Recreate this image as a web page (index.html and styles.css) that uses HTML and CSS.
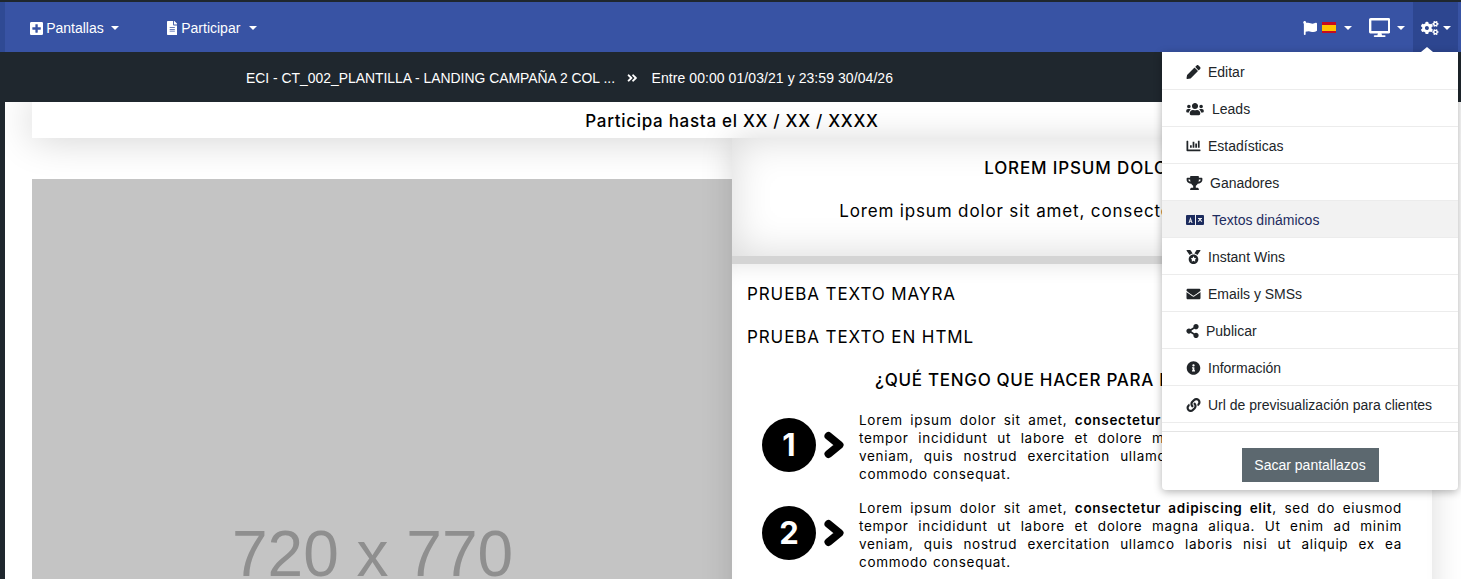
FILE: index.html
```html
<!DOCTYPE html>
<html lang="es">
<head>
    <meta charset="UTF-8">
    <meta name="viewport" content="width=device-width, initial-scale=1.0">
    <title>Landing campaña</title>
    <link rel="stylesheet" href="styles.css">
</head>
<body>
    <header class="navbar">
        <nav class="nav-left">
            <a class="nav-link nav-pantallas">
                <svg class="icon" viewBox="0 0 448 512"><path d="M400 32H48C21.5 32 0 53.5 0 80v352c0 26.5 21.5 48 48 48h352c26.5 0 48-21.5 48-48V80c0-26.5-21.5-48-48-48zm-32 252c0 6.6-5.4 12-12 12h-92v92c0 6.6-5.4 12-12 12h-56c-6.6 0-12-5.4-12-12v-92H92c-6.6 0-12-5.4-12-12v-56c0-6.6 5.4-12 12-12h92v-92c0-6.6 5.4-12 12-12h56c6.6 0 12 5.4 12 12v92h92c6.6 0 12 5.4 12 12v56z"/></svg>
                Pantallas <span class="caret"></span>
            </a>
            <a class="nav-link nav-participar">
                <svg class="icon" viewBox="0 0 384 512"><path d="M224 136V0H24C10.7 0 0 10.7 0 24v464c0 13.3 10.7 24 24 24h336c13.3 0 24-10.7 24-24V160H248c-13.2 0-24-10.8-24-24zm64 236c0 6.6-5.4 12-12 12H108c-6.6 0-12-5.4-12-12v-8c0-6.6 5.4-12 12-12h168c6.6 0 12 5.4 12 12v8zm0-64c0 6.6-5.4 12-12 12H108c-6.6 0-12-5.4-12-12v-8c0-6.6 5.4-12 12-12h168c6.6 0 12 5.4 12 12v8zm0-72v8c0 6.6-5.4 12-12 12H108c-6.6 0-12-5.4-12-12v-8c0-6.6 5.4-12 12-12h168c6.6 0 12 5.4 12 12zm96-114.100v6.100H256V0h6.100c6.4 0 12.5 2.5 17 7l97.900 98c4.5 4.5 7 10.6 7 16.900z"/></svg>
                Participar <span class="caret"></span>
            </a>
        </nav>
        <nav class="nav-right">
            <a class="nav-tool nav-lang">
                <svg class="icon" viewBox="0 0 512 512"><path d="M349.565 98.783C295.978 98.783 251.721 64 184.348 64c-24.955 0-47.309 4.384-68.045 12.013a55.947 55.947 0 0 0 3.586-23.562C118.117 24.015 94.806 1.206 66.338.048 34.345-1.254 8 24.296 8 56c0 19.026 9.497 35.825 24 45.945V488c0 13.255 10.745 24 24 24h16c13.255 0 24-10.745 24-24v-94.400c28.311-12.064 63.582-22.122 114.435-22.122 53.588 0 97.844 34.783 165.217 34.783 48.169 0 86.667-16.294 122.505-40.858C506.84 359.452 512 349.571 512 339.045v-243.100c0-23.393-24.269-38.87-45.485-29.016-34.338 15.948-76.454 31.854-116.95 31.854z"/></svg>
                <span class="flag"><span class="flag-mid"></span></span>
                <span class="caret"></span>
            </a>
            <a class="nav-tool nav-screen">
                <svg class="icon" viewBox="0 0 576 512"><path d="M528 0H48C21.5 0 0 21.5 0 48v320c0 26.5 21.5 48 48 48h192l-16 48h-72c-13.3 0-24 10.7-24 24s10.7 24 24 24h272c13.3 0 24-10.7 24-24s-10.7-24-24-24h-72l-16-48h192c26.5 0 48-21.5 48-48V48c0-26.5-21.5-48-48-48zm-16 352H64V64h448v288z"/></svg>
                <span class="caret"></span>
            </a>
            <a class="nav-tool nav-cogs">
                <svg class="icon" viewBox="0 0 640 512"><path d="M512.100 191l-8.200 14.300c-3 5.300-9.400 7.500-15.100 5.400-11.800-4.400-22.600-10.700-32.100-18.600-4.600-3.800-5.800-10.500-2.800-15.700l8.200-14.300c-6.900-8-12.300-17.300-15.900-27.400h-16.500c-6 0-11.200-4.300-12.200-10.300-2-12-2.100-24.600 0-37.100 1-6 6.200-10.400 12.200-10.400h16.500c3.600-10.100 9-19.400 15.900-27.400l-8.200-14.300c-3-5.200-1.900-11.900 2.800-15.700 9.500-7.900 20.400-14.200 32.100-18.600 5.700-2.100 12.100.1 15.100 5.400l8.200 14.300c10.500-1.900 21.200-1.900 31.700 0L552 6.300c3-5.300 9.400-7.500 15.100-5.400 11.800 4.400 22.600 10.700 32.100 18.600 4.600 3.800 5.800 10.500 2.800 15.700l-8.200 14.300c6.900 8 12.300 17.300 15.900 27.400h16.500c6 0 11.200 4.300 12.200 10.300 2 12 2.100 24.600 0 37.100-1 6-6.200 10.400-12.200 10.400h-16.500c-3.600 10.100-9 19.400-15.900 27.400l8.200 14.300c3 5.200 1.900 11.900-2.800 15.700-9.500 7.900-20.400 14.200-32.100 18.600-5.700 2.100-12.100-.1-15.100-5.400l-8.200-14.300c-10.400 1.900-21.200 1.900-31.700 0zm-10.500-58.800c38.500 29.600 82.400-14.300 52.800-52.800-38.500-29.700-82.400 14.300-52.800 52.800zM386.300 286.100l33.700 16.800c10.100 5.800 14.500 18.100 10.500 29.100-8.900 24.200-26.400 46.400-42.600 65.800-7.400 8.900-20.200 11.100-30.300 5.300l-29.100-16.800c-16 13.700-34.600 24.600-54.900 31.700v33.600c0 11.600-8.300 21.600-19.700 23.600-24.600 4.200-50.400 4.400-75.900 0-11.500-2-20-11.900-20-23.600V418c-20.300-7.200-38.900-18-54.900-31.700L74 403c-10 5.800-22.900 3.600-30.300-5.300-16.200-19.400-33.300-41.600-42.200-65.700-4-10.900.4-23.200 10.500-29.100l33.300-16.800c-3.900-20.900-3.900-42.400 0-63.400L12 205.800c-10.100-5.800-14.600-18.100-10.500-29 8.900-24.200 26-46.400 42.200-65.800 7.400-8.900 20.200-11.100 30.300-5.300l29.100 16.800c16-13.700 34.600-24.600 54.900-31.700V57.100c0-11.500 8.200-21.500 19.600-23.500 24.600-4.200 50.500-4.400 76-.1 11.500 2 20 11.900 20 23.600v33.600c20.300 7.200 38.900 18 54.900 31.700l29.100-16.800c10-5.800 22.900-3.600 30.300 5.300 16.200 19.400 33.200 41.600 42.100 65.800 4 10.900.1 23.200-10 29.100l-33.700 16.800c3.900 21 3.900 42.500 0 63.500zm-117.600 21.100c59.200-77-28.700-164.900-105.700-105.700-59.200 77 28.700 164.900 105.700 105.700zm243.400 182.700l-8.200 14.300c-3 5.300-9.400 7.500-15.100 5.400-11.800-4.400-22.600-10.700-32.100-18.600-4.600-3.800-5.800-10.500-2.800-15.700l8.200-14.300c-6.900-8-12.300-17.300-15.900-27.400h-16.500c-6 0-11.200-4.300-12.200-10.300-2-12-2.100-24.600 0-37.100 1-6 6.200-10.400 12.200-10.400h16.500c3.600-10.100 9-19.400 15.900-27.400l-8.200-14.300c-3-5.200-1.900-11.900 2.800-15.700 9.500-7.900 20.400-14.200 32.100-18.600 5.700-2.100 12.100.1 15.100 5.400l8.200 14.300c10.500-1.900 21.200-1.900 31.700 0l8.200-14.300c3-5.300 9.400-7.500 15.100-5.400 11.800 4.400 22.600 10.700 32.100 18.600 4.600 3.800 5.800 10.500 2.800 15.700l-8.200 14.300c6.900 8 12.300 17.300 15.900 27.400h16.500c6 0 11.200 4.300 12.200 10.300 2 12 2.100 24.600 0 37.100-1 6-6.200 10.400-12.200 10.400h-16.500c-3.600 10.100-9 19.400-15.900 27.400l8.200 14.300c3 5.200 1.900 11.900-2.800 15.700-9.500 7.900-20.400 14.200-32.100 18.600-5.700 2.100-12.100-.1-15.100-5.400l-8.200-14.300c-10.400 1.900-21.200 1.900-31.700 0zM501.600 431c38.500 29.600 82.400-14.300 52.800-52.800-38.500-29.600-82.400 14.300-52.800 52.800z"/></svg>
                <span class="caret"></span>
            </a>
        </nav>
    </header>

    <div class="subbar">
        <span class="subbar-name">ECI - CT_002_PLANTILLA - LANDING CAMPAÑA 2 COL ...</span>
        <svg class="subbar-arrows" viewBox="0 0 448 512"><path d="M224.300 273l-136 136c-9.400 9.400-24.600 9.400-33.900 0l-22.600-22.600c-9.400-9.400-9.400-24.600 0-33.900l96.400-96.400-96.400-96.400c-9.400-9.400-9.400-24.600 0-33.900L54.300 103c9.400-9.400 24.600-9.400 33.900 0l136 136c9.500 9.400 9.500 24.600.1 34zm192-34l-136-136c-9.400-9.400-24.600-9.400-33.900 0l-22.600 22.600c-9.400 9.400-9.400 24.600 0 33.900l96.400 96.400-96.400 96.400c-9.400 9.400-9.400 24.600 0 33.900l22.600 22.600c9.400 9.400 24.600 9.400 33.900 0l136-136c9.400-9.200 9.400-24.400 0-33.800z"/></svg>
        <span class="subbar-dates">Entre 00:00 01/03/21 y 23:59 30/04/26</span>
    </div>

    <main class="stage">
        <div class="banner">Participa hasta el XX / XX / XXXX</div>
        <div class="columns">
            <div class="col-image">
                <div class="placeholder">720 x 770</div>
            </div>
            <div class="col-text">
                <section class="intro">
                    <h2>LOREM IPSUM DOLOR</h2>
                    <p>Lorem ipsum dolor sit amet, consectetur adipiscing elit</p>
                </section>
                <section class="details">
                    <p class="line">PRUEBA TEXTO MAYRA</p>
                    <p class="line">PRUEBA TEXTO EN HTML</p>
                    <h3>¿QUÉ TENGO QUE HACER PARA PARTICIPAR?</h3>
                    <div class="step">
                        <span class="step-num">1</span>
                        <svg class="step-arrow" viewBox="0 0 22 28"><path d="M5.5 5 L16.500 14 L5.5 23" /></svg>
                        <p>Lorem ipsum dolor sit amet, <strong>consectetur adipiscing elit</strong>, sed do eiusmod tempor incididunt ut labore et dolore magna aliqua. Ut enim ad minim veniam, quis nostrud exercitation ullamco laboris nisi ut aliquip ex ea commodo consequat.</p>
                    </div>
                    <div class="step">
                        <span class="step-num">2</span>
                        <svg class="step-arrow" viewBox="0 0 22 28"><path d="M5.5 5 L16.500 14 L5.5 23" /></svg>
                        <p>Lorem ipsum dolor sit amet, <strong>consectetur adipiscing elit</strong>, sed do eiusmod tempor incididunt ut labore et dolore magna aliqua. Ut enim ad minim veniam, quis nostrud exercitation ullamco laboris nisi ut aliquip ex ea commodo consequat.</p>
                    </div>
                </section>
            </div>
        </div>
    </main>

    <div class="dropdown">
        <span class="dropdown-arrow"></span>
        <a class="dropdown-item">
            <svg class="item-icon" viewBox="0 0 512 512"><path d="M497.900 142.100l-46.100 46.100c-4.700 4.700-12.300 4.700-17 0l-111-111c-4.700-4.700-4.700-12.300 0-17l46.100-46.100c18.700-18.700 49.100-18.700 67.900 0l60.100 60.100c18.800 18.700 18.800 49.100 0 67.900zM284.200 99.800L21.600 362.400.4 483.900c-2.900 16.400 11.400 30.600 27.800 27.800l121.500-21.300 262.600-262.600c4.700-4.700 4.700-12.300 0-17l-111-111c-4.800-4.700-12.400-4.700-17.100 0z"/></svg>
            <span class="item-text">Editar</span>
        </a>
        <a class="dropdown-item item-leads">
            <svg class="item-icon" viewBox="0 0 640 512"><path d="M96 224c35.300 0 64-28.700 64-64s-28.700-64-64-64-64 28.700-64 64 28.700 64 64 64zm448 0c35.300 0 64-28.700 64-64s-28.700-64-64-64-64 28.700-64 64 28.700 64 64 64zm32 32h-64c-17.600 0-33.500 7.100-45.100 18.600 40.300 22.100 68.900 62 75.100 109.400h66c17.700 0 32-14.300 32-32v-32c0-35.300-28.700-64-64-64zm-256 0c61.900 0 112-50.100 112-112S381.900 32 320 32 208 82.100 208 144s50.100 112 112 112zm76.800 32h-8.300c-20.800 10-43.900 16-68.500 16s-47.600-6-68.500-16h-8.300C179.600 288 128 339.600 128 403.200V432c0 26.500 21.500 48 48 48h288c26.500 0 48-21.500 48-48v-28.800c0-63.600-51.600-115.200-115.200-115.200zm-223.700-13.400C161.500 263.100 145.600 256 128 256H64c-35.300 0-64 28.700-64 64v32c0 17.700 14.300 32 32 32h65.900c6.300-47.400 34.900-87.300 75.200-109.400z"/></svg>
            <span class="item-text">Leads</span>
        </a>
        <a class="dropdown-item">
            <svg class="item-icon" viewBox="0 0 512 512"><path d="M332.800 320h38.400c6.400 0 12.800-6.400 12.800-12.800V172.800c0-6.400-6.400-12.800-12.800-12.800h-38.400c-6.400 0-12.800 6.400-12.800 12.800v134.400c0 6.400 6.400 12.800 12.800 12.800zm96 0h38.400c6.400 0 12.800-6.400 12.800-12.800V76.800c0-6.400-6.400-12.800-12.800-12.800h-38.400c-6.400 0-12.800 6.400-12.800 12.800v230.400c0 6.400 6.400 12.800 12.800 12.800zm-288 0h38.400c6.400 0 12.800-6.400 12.800-12.800v-70.400c0-6.400-6.400-12.800-12.800-12.800h-38.400c-6.400 0-12.800 6.400-12.800 12.800v70.400c0 6.400 6.400 12.800 12.800 12.800zm96 0h38.400c6.400 0 12.800-6.400 12.800-12.800V108.800c0-6.400-6.400-12.800-12.800-12.800h-38.400c-6.400 0-12.800 6.400-12.800 12.800v198.400c0 6.400 6.400 12.800 12.800 12.800zM496 384H64V80c0-8.840-7.160-16-16-16H16C7.160 64 0 71.160 0 80v336c0 17.670 14.330 32 32 32h464c8.840 0 16-7.160 16-16v-32c0-8.840-7.160-16-16-16z"/></svg>
            <span class="item-text">Estadísticas</span>
        </a>
        <a class="dropdown-item item-ganadores">
            <svg class="item-icon" viewBox="0 0 576 512"><path d="M552 64H448V24c0-13.300-10.700-24-24-24H152c-13.300 0-24 10.700-24 24v40H24C10.700 64 0 74.700 0 88v56c0 35.700 22.500 72.400 61.900 100.700 31.500 22.700 69.800 37.100 110 41.700C203.300 338.500 240 360 240 360v72h-48c-35.300 0-64 20.700-64 56v12c0 6.600 5.400 12 12 12h296c6.600 0 12-5.400 12-12v-12c0-35.300-28.700-56-64-56h-48v-72s36.700-21.500 68.100-73.600c40.300-4.600 78.600-19 110-41.700 39.300-28.300 61.900-65 61.900-100.700V88c0-13.300-10.700-24-24-24zM99.300 192.800C74.900 175.200 64 155.600 64 144v-16h64.200c1 32.600 5.800 61.200 12.800 86.200-15.100-5.200-29.200-12.400-41.700-21.400zM512 144c0 16.100-17.700 36.100-35.300 48.800-12.500 9-26.700 16.200-41.800 21.400 7-25 11.800-53.600 12.800-86.200H512v16z"/></svg>
            <span class="item-text">Ganadores</span>
        </a>
        <a class="dropdown-item item-active item-textos">
            <svg class="item-icon" viewBox="0 0 18 14"><path fill-rule="evenodd" d="M1 2h7a1 1 0 0 1 1 0v10H1a1 1 0 0 1-1-1V3a1 1 0 0 1 1-1zM4.5 4 L2.5 10h1l.4-1.300h1.200L5.5 10h1zM4.200 7.800 l.3-1.200.3 1.200zM10 2h7a1 1 0 0 1 1 1v8a1 1 0 0 1-1 1h-7zM12 5v1h1.300c-.2.800-.7 1.600-1.500 2.200l.5.800c.8-.5 1.300-1.100 1.700-1.800.4.700 1 1.300 1.700 1.800l.5-.8c-.8-.6-1.300-1.400-1.500-2.200H16V5z"/></svg>
            <span class="item-text">Textos dinámicos</span>
        </a>
        <a class="dropdown-item">
            <svg class="item-icon" viewBox="0 0 512 512"><path d="M223.750 130.750L154.620 15.540A31.997 31.997 0 0 0 127.180 0H16.030C3.080 0-4.500 14.570 2.920 25.180l111.270 158.960c29.720-27.770 67.520-46.830 109.560-53.390zM495.970 0H384.820c-11.240 0-21.660 5.900-27.440 15.540l-69.130 115.210c42.040 6.560 79.840 25.620 109.560 53.380L509.080 25.180C516.500 14.570 508.920 0 495.970 0zM256 160c-97.200 0-176 78.800-176 176s78.800 176 176 176 176-78.800 176-176-78.800-176-176-176zm92.520 157.260l-37.930 36.960 8.970 52.220c1.600 9.360-8.260 16.510-16.650 12.090L256 393.880l-46.900 24.650c-8.400 4.450-18.250-2.740-16.650-12.090l8.970-52.220-37.930-36.960c-6.820-6.640-3.050-18.230 6.350-19.590l52.430-7.640 23.430-47.520c2.110-4.280 6.190-6.390 10.280-6.390 4.110 0 8.220 2.140 10.330 6.390l23.430 47.520 52.430 7.640c9.400 1.360 13.170 12.950 6.350 19.590z"/></svg>
            <span class="item-text">Instant Wins</span>
        </a>
        <a class="dropdown-item">
            <svg class="item-icon" viewBox="0 0 512 512"><path d="M502.300 190.800c3.900-3.100 9.700-.2 9.700 4.700V400c0 26.500-21.500 48-48 48H48c-26.500 0-48-21.500-48-48V195.600c0-5 5.700-7.800 9.700-4.700 22.400 17.400 52.100 39.500 154.100 113.600 21.100 15.400 56.700 47.800 92.200 47.600 35.700.3 72-32.800 92.300-47.600 102-74.100 131.600-96.300 154-113.700zM256 320c23.200.4 56.600-29.200 73.400-41.400 132.700-96.300 142.800-104.700 173.400-128.700 5.800-4.500 9.200-11.500 9.200-18.900v-19c0-26.500-21.500-48-48-48H48C21.500 64 0 85.500 0 112v19c0 7.400 3.400 14.300 9.200 18.900 30.600 23.900 40.700 32.400 173.400 128.700 16.800 12.200 50.200 41.800 73.400 41.400z"/></svg>
            <span class="item-text">Emails y SMSs</span>
        </a>
        <a class="dropdown-item item-publicar">
            <svg class="item-icon" viewBox="0 0 448 512"><path d="M352 320c-22.600 0-43.400 7.800-59.800 20.900l-102.500-64.100a96.600 96.600 0 0 0 0-41.700l102.500-64.100C308.600 184.200 329.400 192 352 192c53 0 96-43 96-96S405 0 352 0s-96 43-96 96c0 7.200.8 14.100 2.300 20.800L155.800 180.900C139.400 167.800 118.600 160 96 160c-53 0-96 43-96 96s43 96 96 96c22.600 0 43.400-7.800 59.800-20.900l102.500 64.100A96.300 96.300 0 0 0 256 416c0 53 43 96 96 96s96-43 96-96-43-96-96-96z"/></svg>
            <span class="item-text">Publicar</span>
        </a>
        <a class="dropdown-item">
            <svg class="item-icon" viewBox="0 0 512 512"><path d="M256 8C119 8 8 119.100 8 256c0 137 111 248 248 248s248-111 248-248C504 119.100 393 8 256 8zm0 110c23.200 0 42 18.800 42 42s-18.800 42-42 42-42-18.800-42-42 18.800-42 42-42zm56 254c0 6.600-5.400 12-12 12h-88c-6.600 0-12-5.400-12-12v-24c0-6.600 5.400-12 12-12h12v-64h-12c-6.600 0-12-5.400-12-12v-24c0-6.600 5.400-12 12-12h64c6.600 0 12 5.400 12 12v100h12c6.600 0 12 5.400 12 12v24z"/></svg>
            <span class="item-text">Información</span>
        </a>
        <a class="dropdown-item">
            <svg class="item-icon" viewBox="0 0 512 512"><path d="M326.600 185.400c59.700 59.800 58.900 155.700.4 214.600-.1.100-.2.300-.4.400l-67.200 67.200c-59.300 59.300-155.700 59.300-215 0-59.300-59.300-59.300-155.700 0-215l37.100-37.100c9.800-9.800 26.800-3.300 27.300 10.600.6 17.700 3.800 35.500 9.700 52.700 2 5.800.6 12.300-3.800 16.600l-13.100 13.100c-28 28-28.900 73.700-1.200 102 28 28.600 74.100 28.700 102.300.5l67.200-67.200c28.200-28.200 28.100-73.800 0-101.800-3.700-3.700-7.400-6.600-10.300-8.600a16 16 0 0 1-6.900-12.600c-.4-10.600 3.400-21.500 11.700-29.800l21.100-21.100c5.500-5.500 14.200-6.200 20.600-1.700a152.500 152.500 0 0 1 20.500 17.200zM467.500 44.400c-59.300-59.300-155.700-59.300-215 0l-67.200 67.200c-.1.100-.3.300-.4.400-58.600 58.900-59.400 154.800.4 214.600a152.500 152.500 0 0 0 20.500 17.200c6.400 4.500 15.100 3.800 20.600-1.700l21.100-21.100c8.300-8.300 12.100-19.200 11.700-29.800a16 16 0 0 0-6.900-12.600c-2.900-2-6.600-4.900-10.300-8.600-28.100-28-28.200-73.600 0-101.800l67.200-67.200c28.200-28.200 74.300-28.100 102.300.5 27.800 28.300 26.900 74 1.200 102l-13.100 13.100c-4.400 4.300-5.800 10.800-3.800 16.600 5.900 17.200 9.100 35 9.700 52.700.5 13.900 17.500 20.400 27.300 10.600l37.100-37.100c59.300-59.300 59.300-155.700 0-215z"/></svg>
            <span class="item-text">Url de previsualización para clientes</span>
        </a>
        <div class="dropdown-footer">
            <button class="btn-shots">Sacar pantallazos</button>
        </div>
    </div>
</body>
</html>
```

FILE: styles.css
```css
html, body {
    height: 579px;
    margin: 0;
    overflow: hidden;
}
body {
    position: relative;
    background: #1f272e;
    font-family: "Liberation Sans", Arial, sans-serif;
    color: #000;
    padding-top: 2px;
    box-sizing: border-box;
}
a {
    display: flex;
    align-items: center;
    text-decoration: none;
}

/* barra superior */
.navbar {
    height: 50px;
    background: #3853a4;
    border-left: 5px solid #2f4a94;
    display: flex;
    justify-content: space-between;
    color: #fff;
    font-size: 14px;
}
.nav-left {
    display: flex;
    padding-left: 25px;
    gap: 48px;
}
.nav-link {
    gap: 3px;
    padding-top: 2px;
}
.nav-participar {
    gap: 4px;
}
.nav-link .caret {
    margin-left: 4px;
}
.nav-participar .caret {
    margin-left: 5px;
}
.icon {
    fill: #fff;
    height: 14px;
    display: block;
}
.nav-pantallas .icon {
    height: 15px;
}
.caret {
    width: 0;
    height: 0;
    border-top: 4px solid #fff;
    border-left: 4px solid transparent;
    border-right: 4px solid transparent;
}
.nav-right {
    display: flex;
    padding-right: 3px;
}
.nav-tool {
    padding-top: 1px;
}
.nav-lang {
    gap: 5px;
    margin-right: 17px;
}
.nav-lang .caret {
    margin-left: 3px;
}
.flag {
    width: 14px;
    height: 11px;
    background: #c60b1e;
    display: flex;
    align-items: center;
}
.flag-mid {
    display: block;
    width: 100%;
    height: 6px;
    background: #ffc400;
}
.nav-screen {
    gap: 7px;
    margin-right: 8px;
}
.nav-screen .icon {
    height: 19px;
}
.nav-cogs {
    background: #2d4690;
    width: 45px;
    padding-left: 8px;
    box-sizing: border-box;
    gap: 4px;
}

/* barra con el nombre de la campaña */
.subbar {
    height: 50px;
    box-sizing: border-box;
    padding: 1px 0 0 246px;
    display: flex;
    align-items: center;
    color: #fff;
    font-size: 14px;
}
.subbar-name {
    font-size: 13.9px;
}
.subbar-arrows {
    fill: #fff;
    height: 12px;
    margin: 0 14px 0 12px;
}
.subbar-dates {
    letter-spacing: 0.07px;
}

/* contenido */
.stage {
    margin-left: 5px;
    height: 477px;
    background: #fff;
    padding-left: 27px;
    font-family: "Inter", "Open Sans", sans-serif;
    overflow: hidden;
}
.banner {
    width: 1400px;
    height: 36px;
    line-height: 38px;
    text-align: center;
    background: #fff;
    font-size: 17px;
    font-weight: 500;
    letter-spacing: 0.7px;
    box-shadow: 0 0 40px rgba(0, 0, 0, 0.2);
    position: relative;
    z-index: 1;
}
.columns {
    display: flex;
    width: 1400px;
}
.col-image {
    width: 700px;
    padding-top: 41px;
}
.placeholder {
    height: 770px;
    box-sizing: border-box;
    padding-right: 19px;
    background: #c4c4c4;
    color: #8f8f8f;
    font-family: "Liberation Sans", Arial, sans-serif;
    font-size: 64px;
    text-align: center;
    line-height: 750px;
}
.col-text {
    width: 700px;
    position: relative;
    z-index: 2;
    box-shadow: 0 0 30px rgba(0, 0, 0, 0.15);
}
.intro {
    height: 126px;
    box-sizing: border-box;
    padding-top: 19px;
    text-align: center;
    background: #fff;
    box-shadow: inset 0 0 40px rgba(0, 0, 0, 0.16);
    border-bottom: 8px solid #d4d4d4;
    letter-spacing: 0.85px;
}
.intro h2 {
    margin: 0;
    font-size: 17px;
    font-weight: 500;
    line-height: 22px;
}
.intro p {
    margin: 21px 0 0;
    font-size: 17px;
    line-height: 22px;
    white-space: nowrap;
}
.details {
    height: 400px;
    background: #fff;
    padding: 19px 30px 0 15px;
    box-shadow: inset 0 14px 20px -12px rgba(0, 0, 0, 0.1);
}
.line {
    margin: 0 0 21px;
    font-size: 17px;
    line-height: 22px;
    letter-spacing: 0.9px;
}
.details h3 {
    margin: 0 0 20px;
    font-size: 17px;
    font-weight: 500;
    line-height: 22px;
    letter-spacing: 0.7px;
    text-align: center;
}
.step {
    display: flex;
    align-items: flex-start;
    margin-bottom: 16px;
}
.step-num {
    flex: none;
    width: 54px;
    height: 54px;
    margin: 7px 0 0 15px;
    border-radius: 50%;
    background: #000;
    color: #fff;
    font-size: 31px;
    font-weight: 700;
    line-height: 54px;
    text-align: center;
}
.step-arrow {
    flex: none;
    width: 22px;
    height: 28px;
    margin: 20px 14px 0 7px;
    fill: none;
    stroke: #000;
    stroke-width: 8;
    stroke-linecap: round;
    stroke-linejoin: round;
}
.step p {
    margin: 0;
    font-size: 13.5px;
    line-height: 18px;
    letter-spacing: 0.7px;
    word-spacing: 0.6px;
    text-align: justify;
}
.step strong {
    font-weight: 600;
}

/* menú desplegable */
.dropdown {
    position: absolute;
    top: 52px;
    left: 1162px;
    width: 296px;
    height: 438px;
    padding-top: 1px;
    box-sizing: border-box;
    background: #fff;
    border-radius: 0 0 4px 4px;
    box-shadow: 0 2px 8px rgba(0, 0, 0, 0.3);
    font-size: 14px;
    z-index: 5;
}
.dropdown-arrow {
    position: absolute;
    top: -5px;
    left: 259px;
    width: 0;
    height: 0;
    border-bottom: 5px solid #fff;
    border-left: 6px solid transparent;
    border-right: 6px solid transparent;
}
.dropdown-item {
    height: 37px;
    box-sizing: border-box;
    padding: 1px 0 0 24px;
    border-bottom: 1px solid #ececec;
    color: #212529;
    gap: 7px;
}
.item-icon {
    height: 14px;
    width: 15px;
    fill: #212529;
    display: block;
}
.item-leads .item-icon,
.item-textos .item-icon {
    width: 18px;
}
.item-leads,
.item-textos {
    gap: 8px;
}
.item-ganadores .item-icon {
    width: 17px;
}
.item-publicar .item-icon {
    width: 13px;
}
.item-active {
    background: #f2f2f2;
    color: #1d2c5e;
}
.item-active .item-icon {
    fill: #1d2c5e;
}
.dropdown-footer {
    margin-top: 8px;
    border-top: 1px solid #e4e4e4;
    padding: 16px 0 0 0;
    text-align: center;
}
.btn-shots {
    width: 137px;
    height: 34px;
    border: 0;
    background: #5c686f;
    color: #fff;
    font-family: "Liberation Sans", Arial, sans-serif;
    font-size: 14px;
}
```
